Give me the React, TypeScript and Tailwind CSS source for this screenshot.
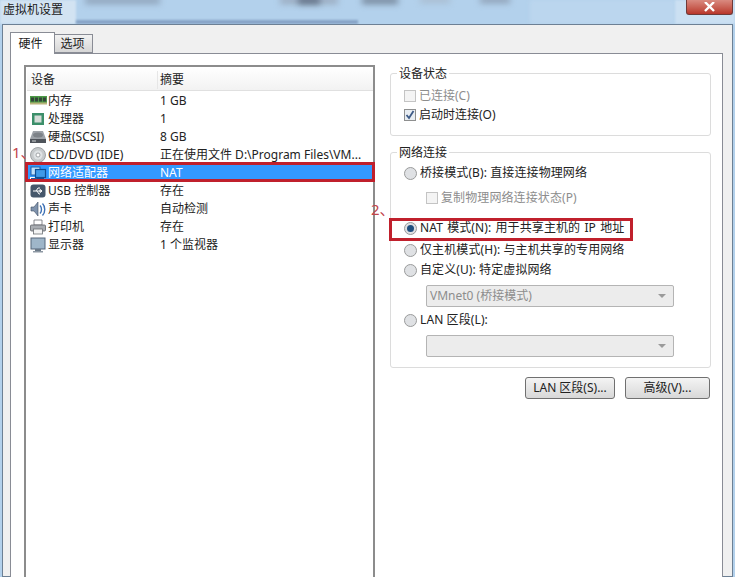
import React from 'react';

const font = "font-['Noto_Sans','Noto_Sans_CJK_SC',sans-serif]";

const MemoryIcon = () => (
  <svg width="17" height="16" viewBox="0 0 17 16">
    <rect x="0" y="3" width="17" height="8" fill="#4c9a46" />
    <rect x="1" y="4.5" width="3" height="4" fill="#34453a" />
    <rect x="5" y="4.5" width="3" height="4" fill="#34453a" />
    <rect x="9" y="4.5" width="3" height="4" fill="#34453a" />
    <rect x="13" y="4.5" width="3" height="4" fill="#34453a" />
    <rect x="0" y="9.5" width="17" height="2" fill="#b9b47a" />
  </svg>
);
const CpuIcon = () => (
  <svg width="16" height="16" viewBox="0 0 16 16">
    <rect x="2" y="2" width="12" height="12" fill="#3c8f6a" />
    <rect x="4.5" y="4.5" width="7" height="7" fill="#d5dcd8" />
  </svg>
);
const DiskIcon = () => (
  <svg width="16" height="16" viewBox="0 0 16 16">
    <path d="M3 2h10l3 8v4H0v-4z" fill="#9da2a8" />
    <ellipse cx="8" cy="6" rx="5" ry="2.5" fill="#7d8288" />
    <rect x="0" y="10" width="16" height="4" fill="#4f545b" />
    <rect x="2" y="11.5" width="4" height="1" fill="#cfd3d6" />
  </svg>
);
const CdIcon = () => (
  <svg width="16" height="16" viewBox="0 0 16 16">
    <circle cx="8" cy="8" r="7.5" fill="#c6cacc" stroke="#8f9397" strokeWidth="0.8" />
    <circle cx="8" cy="8" r="4.5" fill="#dfe3e5" />
    <circle cx="8" cy="8" r="2" fill="#fff" stroke="#8f9397" strokeWidth="0.8" />
  </svg>
);
const NetIcon = () => (
  <svg width="17" height="16" viewBox="0 0 17 16">
    <rect x="1" y="2" width="9" height="8" fill="#bfe0fb" stroke="#1d5fa8" strokeWidth="1" />
    <rect x="0" y="12" width="7" height="3" fill="#ffffff" />
    <path d="M1 13.5h6" fill="none" stroke="#1d5fa8" strokeWidth="1" />
    <rect x="5.5" y="4.5" width="10" height="8" fill="#3f9ae8" stroke="#0f4f93" strokeWidth="1.2" />
    <rect x="7" y="13" width="7" height="1.5" fill="#0f4f93" />
  </svg>
);
const UsbIcon = () => (
  <svg width="16" height="16" viewBox="0 0 16 16">
    <rect x="0.5" y="1.5" width="15" height="13" rx="3" fill="#46576b" />
    <path d="M3 8h9M12 8l-2-1.5v3zM6 8l2-3h2M7 8l2 3h1" fill="none" stroke="#fff" strokeWidth="1" />
  </svg>
);
const SoundIcon = () => (
  <svg width="16" height="16" viewBox="0 0 16 16">
    <path d="M1 6h3l4-5v14l-4-5H1z" fill="#7f93ad" stroke="#3e4d63" strokeWidth="0.6" />
    <path d="M10 4.5c2 2 2 6 0 8M12.5 2.5c3 3 3 9 0 12" fill="none" stroke="#3e71b5" strokeWidth="1.4" />
  </svg>
);
const PrinterIcon = () => (
  <svg width="16" height="16" viewBox="0 0 16 16">
    <path d="M4 1h8v5H4z" fill="#fff" stroke="#6c7074" strokeWidth="0.8" />
    <rect x="0.5" y="6" width="15" height="6" rx="1" fill="#a9adb2" stroke="#5f6368" strokeWidth="0.8" />
    <rect x="3.5" y="10" width="9" height="5" fill="#f4f4f4" stroke="#6c7074" strokeWidth="0.8" />
  </svg>
);
const MonitorIcon = () => (
  <svg width="16" height="16" viewBox="0 0 16 16">
    <rect x="1" y="1" width="14" height="11" fill="#9fb6c9" stroke="#56677a" strokeWidth="1" />
    <rect x="5" y="12" width="6" height="2" fill="#6c7a88" />
    <rect x="3" y="14" width="10" height="1.5" fill="#8d98a3" />
  </svg>
);

const devices = [
  { icon: <MemoryIcon />, name: '内存', summary: '1 GB' },
  { icon: <CpuIcon />, name: '处理器', summary: '1' },
  { icon: <DiskIcon />, name: '硬盘(SCSI)', summary: '8 GB' },
  { icon: <CdIcon />, name: 'CD/DVD (IDE)', summary: '正在使用文件 D:\\Program Files\\VM...' },
  { icon: <NetIcon />, name: '网络适配器', summary: 'NAT', selected: true },
  { icon: <UsbIcon />, name: 'USB 控制器', summary: '存在' },
  { icon: <SoundIcon />, name: '声卡', summary: '自动检测' },
  { icon: <PrinterIcon />, name: '打印机', summary: '存在' },
  { icon: <MonitorIcon />, name: '显示器', summary: '1 个监视器' },
];

const Check = ({ checked, disabled }: { checked?: boolean; disabled?: boolean }) => (
  <span className={`w-[12px] h-[12px] border flex items-center justify-center shrink-0 ${disabled ? 'border-[#c4c4c4] bg-[#f4f4f4]' : 'border-[#8e8f8f] bg-[#e8edf2]'}`}>
    {checked && (
      <svg width="10" height="10" viewBox="0 0 10 10">
        <path d="M1.5 5l2.5 3 4.5-7" fill="none" stroke="#3d5a86" strokeWidth="1.8" />
      </svg>
    )}
  </span>
);

const Radio = ({ checked }: { checked?: boolean }) => (
  <span className="w-[13px] h-[13px] rounded-full border border-[#9a9b9b] bg-[#dfe1e4] flex items-center justify-center shrink-0">
    {checked && <span className="w-[7px] h-[7px] rounded-full bg-[#1f4f7f]" />}
  </span>
);

const RadioRow = ({ label, checked, className }: { label: string; checked?: boolean; className?: string }) => (
  <div className={`flex items-center gap-[3px] -ml-px h-[18px] text-[12px] text-[#222] tracking-[0.1px] ${className ?? ''}`}>
    <Radio checked={checked} />
    <span className="whitespace-nowrap">{label}</span>
  </div>
);

const Combo = ({ value, className }: { value?: string; className?: string }) => (
  <div className={`ml-[21px] w-[248px] h-[22px] border border-[#b4b4b4] rounded-[2px] bg-[#ececec] flex items-center justify-between pl-[3px] pr-[7px] text-[12px] text-[#8d8d8d] ${className ?? ''}`}>
    <span>{value}</span>
    <span className="w-0 h-0 border-l-[4px] border-r-[4px] border-t-[4px] border-l-transparent border-r-transparent border-t-[#9a9a9a]" />
  </div>
);

const Button = ({ label, className }: { label: string; className?: string }) => (
  <button className={`h-[22px] border border-[#707070] rounded-[3px] bg-gradient-to-b from-[#f4f4f4] to-[#d8d8d8] text-[12px] text-[#222] ${className ?? ''}`}>
    {label}
  </button>
);

export default function App() {
  return (
    <div className={`relative w-[735px] h-[577px] overflow-hidden bg-[#b3d1ec] ${font}`}>
      {/* blurred window behind the glass title bar */}
      <div className="absolute left-0 top-0 w-[76px] h-[24px] bg-[#d2e3f2] blur-[1px]" />
      <div className="absolute left-[530px] top-0 w-[145px] h-[24px] bg-[#bbd6ee] blur-[2px]" />
      <div className="absolute left-[675px] top-0 w-[60px] h-[24px] bg-[#cbe0f2] blur-[1px]" />
      <div className="absolute left-[85px] -top-[3px] w-[75px] h-[7px] bg-[#8fa3ba] blur-[3px]" />
      <div className="absolute left-[280px] -top-[3px] w-[58px] h-[7px] bg-[#9aabbf] blur-[3px]" />
      <div className="absolute left-[298px] -top-[3px] w-[22px] h-[7px] bg-[#5f6e83] blur-[3px]" />
      <div className="absolute left-[362px] -top-[3px] w-[36px] h-[7px] bg-[#76879b] blur-[3px]" />
      <div className="absolute left-[420px] -top-[3px] w-[30px] h-[6px] bg-[#a9bccf] blur-[3px]" />
      <div className="absolute left-[480px] -top-[3px] w-[30px] h-[6px] bg-[#8c9db2] blur-[3px]" />
      <div className="absolute left-[76px] top-[20px] w-[282px] h-[4px] bg-[#86a3c6] blur-[1px]" />

      <div className="relative h-[24px] flex items-start justify-between pl-[3px] pr-[2px]">
        <span className="text-[12px] leading-[20px] text-[#1a1a1a]">虚拟机设置</span>
        <span className="w-[47px] h-[15px] rounded-b-[3px] border border-t-0 border-[#6f3a38] bg-gradient-to-b from-[#d98a80] to-[#b8352a] flex items-center justify-center">
          <svg width="13" height="10" viewBox="0 0 13 10">
            <path d="M2 0l9 9M11 0l-9 9" fill="none" stroke="#fff" strokeWidth="2.4" />
          </svg>
        </span>
      </div>

      <div className="relative mx-[2px] h-[553px] border border-[#6d8094] bg-[#f0f0f0] px-[7px] pt-[7px]">
        <div className="flex items-end h-[21px] text-[12px] text-[#222]">
          <div className="relative z-10 w-[45px] h-[22px] -mb-px pr-[4px] border border-b-0 border-[#898c95] bg-white flex items-center justify-center">硬件</div>
          <div className="w-[38px] h-[19px] pr-[2px] pt-[1px] border border-l-0 border-[#898c95] bg-gradient-to-b from-[#f2f2f2] to-[#d6d6d6] flex items-center justify-center">选项</div>
        </div>

        <div className="h-[530px] w-[713px] border border-[#898c95] bg-white flex gap-[15px] pl-[13px] pt-[11px]">
          <div className="w-[351px] h-[530px] shrink-0 border-2 border-[#8c8c8c] border-b-0 pl-px">
            <div className="flex h-[24px] pt-[3px] items-center bg-gradient-to-b from-white to-[#f2f2f2] border-b border-[#e0e0e0] text-[12px] text-[#222]">
              <span className="w-[131px] pl-[4px] border-r border-[#e6e6e6]">设备</span>
              <span className="pl-[2px]">摘要</span>
            </div>
            {devices.map(d => (
              <div key={d.name} className={`flex items-center h-[18px] pt-[1px] text-[12px] whitespace-nowrap ${d.selected ? 'bg-[#3399ff] text-white' : 'text-[#222]'}`}>
                <span className="w-[20px] pl-[3px] flex items-center shrink-0">{d.icon}</span>
                <span className="w-[111px] shrink-0 pl-[1px]">{d.name}</span>
                <span className="pl-[2px]">{d.summary}</span>
              </div>
            ))}
          </div>

          <div className="w-[321px] pt-[1px]">
            <fieldset className="h-[70px] border border-[#dcdcdc] rounded-[3px] pt-[1px]">
              <legend className="ml-[6px] px-[2px] h-[14px] text-[12px] leading-[16px] text-[#222]">设备状态</legend>
              <div className="flex items-center gap-[3px] h-[19px] ml-[13px] mt-[5px] text-[12px] text-[#8d8d8d]"><Check disabled />已连接(C)</div>
              <div className="flex items-center gap-[3px] h-[19px] ml-[13px] text-[12px] text-[#222]"><Check checked />启动时连接(O)</div>
            </fieldset>

            <fieldset className="h-[223px] mt-[9px] border border-[#dcdcdc] rounded-[3px] pt-[5px] pl-[14px]">
              <legend className="-ml-[8px] px-[2px] h-[14px] text-[12px] leading-[16px] text-[#222]">网络连接</legend>
              <RadioRow label="桥接模式(B): 直接连接物理网络" />
              <div className="flex items-center gap-[3px] h-[18px] mt-[7px] ml-[21px] text-[12px] text-[#8d8d8d] tracking-[0.1px]"><Check disabled />复制物理网络连接状态(P)</div>
              <RadioRow label="NAT 模式(N): 用于共享主机的 IP 地址" checked className="mt-[12px] [word-spacing:1px]" />
              <RadioRow label="仅主机模式(H): 与主机共享的专用网络" className="mt-[4px]" />
              <RadioRow label="自定义(U): 特定虚拟网络" className="mt-[2px]" />
              <Combo value="VMnet0 (桥接模式)" className="mt-[6px]" />
              <RadioRow label="LAN 区段(L):" className="mt-[4px]" />
              <Combo className="mt-[6px]" />
            </fieldset>

            <div className="flex justify-end gap-[10px] mt-[9px] mr-[1px]">
              <Button label="LAN 区段(S)..." className="w-[90px]" />
              <Button label="高级(V)..." className="w-[85px]" />
            </div>
          </div>
        </div>
      </div>

      {/* red annotations */}
      <div className="absolute left-[25px] top-[162px] w-[350px] h-[20px] border-[3px] border-[#c0202c]" />
      <div className="absolute left-[389px] top-[218px] w-[244px] h-[23px] border-[3px] border-[#c0202c]" />
      <span className="absolute left-[12px] top-[141px] text-[15px] text-[#c2454c]">1、</span>
      <span className="absolute left-[371px] top-[198px] text-[15px] text-[#c2454c]">2、</span>
    </div>
  );
}
